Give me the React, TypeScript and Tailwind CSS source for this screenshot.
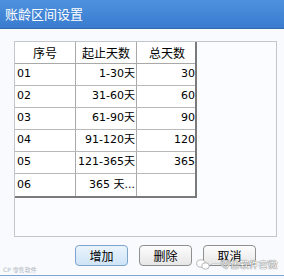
import React from "react";

const rows = [
  ["01", "1-30天", "30"],
  ["02", "31-60天", "60"],
  ["03", "61-90天", "90"],
  ["04", "91-120天", "120"],
  ["05", "121-365天", "365"],
  ["06", "365 天...", ""],
];

const cjk = { fontFamily: '"Noto Sans CJK SC", "Liberation Sans", sans-serif' };
const num = { fontFamily: '"DejaVu Sans", "Noto Sans CJK SC", sans-serif' };

function Btn({ label, primary }: { label: string; primary?: boolean }) {
  return (
    <button
      className={
        "w-[53px] h-[21px] rounded-[4px] border text-[12px] leading-none text-black flex items-center justify-center " +
        (primary
          ? "border-[#7ba3cc] bg-gradient-to-b from-[#eaf4fd] to-[#cfe4f7]"
          : "border-[#8f8f8f] bg-gradient-to-b from-[#fdfdfd] to-[#e6e6e6]")
      }
      style={cjk}
    >
      {label}
    </button>
  );
}

export default function App() {
  return (
    <div className="relative w-[284px] h-[279px] bg-[#f8fafe] flex flex-col overflow-hidden">
      <div
        className="h-[29px] shrink-0 bg-gradient-to-b from-[#4d92de] to-[#3a7bcf] border-b border-[#3468ad] flex items-center pl-[5px] text-white text-[13px]"
        style={cjk}
      >
        账龄区间设置
      </div>
      <div className="pl-[14px] pt-[12px]">
        <div className="w-[263px] h-[196px] border border-[#c3c6cc] bg-[#fbfcff]">
          <div className="w-[182px] bg-white border-r-2 border-b-2 border-r-[#7a7a7a] border-b-[#7a7a7a]">
            <div className="grid grid-cols-[61px_61px_60px] h-[22px] border-b border-[#a9a9a9]" style={cjk}>
              <div className="border-r border-[#a9a9a9] flex items-center justify-center text-[12px]">序号</div>
              <div className="border-r border-[#a9a9a9] flex items-center justify-center text-[12px]">起止天数</div>
              <div className="flex items-center justify-center text-[12px]">总天数</div>
            </div>
            {rows.map((r, i) => (
              <div
                key={r[0]}
                className={
                  "grid grid-cols-[61px_61px_60px] h-[22px] text-[11px] " +
                  (i < rows.length - 1 ? "border-b border-[#b8b8b8]" : "")
                }
                style={num}
              >
                <div className="border-r border-[#a9a9a9] flex items-center pl-[2px]">{r[0]}</div>
                <div className="border-r border-[#a9a9a9] flex items-center justify-end pr-[1px]">{r[1]}</div>
                <div className="flex items-center justify-end pr-[2px]">{r[2]}</div>
              </div>
            ))}
          </div>
        </div>
      </div>
      <div className="flex gap-[11px] pl-[75px] pt-[8px]">
        <Btn label="增加" primary />
        <Btn label="删除" />
        <Btn label="取消" />
      </div>
      <div className="absolute left-0 right-0 top-[275px] h-[1px] bg-[#7ea6d4]" />
      <div className="absolute left-[3px] top-[267px] text-[6px] leading-none text-[#b0b4ba]" style={num}>
        CP 零售软件
      </div>
      <div className="absolute left-[196px] top-[259px] flex items-center gap-[1px]">
        <svg width="14" height="11" viewBox="0 0 14 11">
          <ellipse cx="5" cy="4.5" rx="4.3" ry="3.7" fill="white" stroke="#9a9a9a" strokeWidth="0.7" />
          <ellipse cx="9.5" cy="7" rx="3.8" ry="3.2" fill="white" stroke="#9a9a9a" strokeWidth="0.7" />
        </svg>
        <span
          className="text-[9.5px] leading-none text-white whitespace-nowrap"
          style={{ ...cjk, textShadow: "0 0 1px #666, 0 0 1px #666" }}
        >
          一零售软件官微
        </span>
      </div>
    </div>
  );
}
